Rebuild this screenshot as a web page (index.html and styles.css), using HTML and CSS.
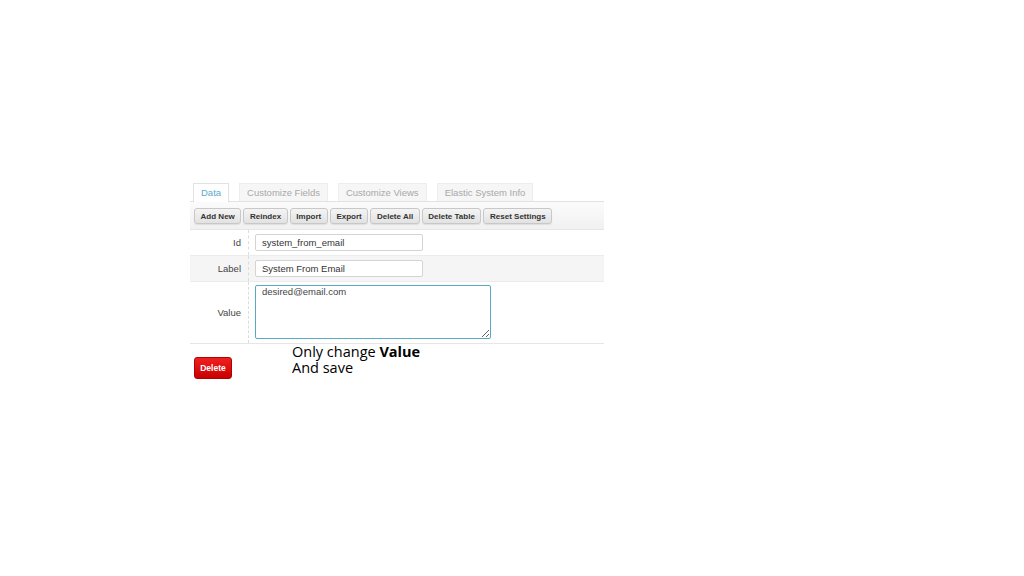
FILE: index.html
```html
<!DOCTYPE html>
<html>
<head>
<meta charset="utf-8">
<link rel="stylesheet" href="styles.css">
</head>
<body>
<div class="panel">
  <div class="tabs">
    <div class="tab active">Data</div>
    <div class="tab">Customize Fields</div>
    <div class="tab">Customize Views</div>
    <div class="tab">Elastic System Info</div>
  </div>
  <div class="toolbar">
    <button class="btn">Add New</button>
    <button class="btn">Reindex</button>
    <button class="btn">Import</button>
    <button class="btn">Export</button>
    <button class="btn">Delete All</button>
    <button class="btn">Delete Table</button>
    <button class="btn">Reset Settings</button>
  </div>
  <div class="form">
    <div class="row">
      <div class="label">Id</div>
      <div class="field"><input class="input" type="text" value="system_from_email"></div>
    </div>
    <div class="row alt">
      <div class="label">Label</div>
      <div class="field"><input class="input" type="text" value="System From Email"></div>
    </div>
    <div class="row tall">
      <div class="label">Value</div>
      <div class="field"><textarea class="area">desired@email.com</textarea></div>
    </div>
  </div>
  <div class="footer">
    <button class="delete">Delete</button>
    <div class="note">
      <div class="line">Only change <b>Value</b></div>
      <div class="line">And save</div>
    </div>
  </div>
</div>
</body>
</html>
```
FILE: styles.css
```css
html, body {
  margin: 0;
  padding: 0;
  background: #fff;
}
body {
  font-family: "Liberation Sans", Arial, sans-serif;
}
.panel {
  margin: 183px 0 0 190px;
  width: 414px;
}
.tabs {
  display: flex;
  gap: 10px;
  padding-left: 3px;
  height: 18px;
  border-bottom: 1px solid #e2e2e2;
}
.tab {
  box-sizing: border-box;
  height: 18px;
  padding: 0 7px;
  font-size: 9.5px;
  line-height: 18px;
  color: #a8a8a8;
  background: #f6f6f6;
  border: 1px solid #ededed;
  border-bottom: none;
}
.tab.active {
  height: 19px;
  color: #5aa9cc;
  background: #fff;
  border-color: #e2e2e2;
}
.toolbar {
  display: flex;
  gap: 2px;
  height: 28px;
  box-sizing: border-box;
  padding: 6px 0 0 4px;
  background: linear-gradient(#fbfbfb, #f1f1f1);
  border-bottom: 1px solid #e6e6e6;
}
.btn {
  height: 16px;
  padding: 0 5.6px;
  font-family: "Liberation Sans", Arial, sans-serif;
  font-size: 8px;
  font-weight: bold;
  color: #333;
  background: linear-gradient(#f4f4f4, #e2e2e2);
  border: 1px solid #c8c8c8;
  border-radius: 3px;
  box-shadow: 0 1px 1px rgba(0,0,0,0.08);
  line-height: 13px;
}
.row {
  display: flex;
  height: 26px;
  border-bottom: 1px solid #ececec;
  box-sizing: border-box;
}
.row.alt {
  background: #f5f5f5;
}
.row.tall {
  height: 62px;
  border-bottom: 1px solid #e6e6e6;
}
.label {
  width: 59px;
  box-sizing: border-box;
  padding-right: 7px;
  border-right: 1px dashed #dcdcdc;
  display: flex;
  align-items: center;
  justify-content: flex-end;
  font-size: 9.5px;
  color: #444;
}
.field {
  padding: 4px 0 0 6px;
}
.row.tall .field {
  padding-top: 3px;
}
.input {
  display: block;
  box-sizing: border-box;
  width: 168px;
  height: 17px;
  border: 1px solid #d4d4d4;
  border-radius: 2px;
  padding: 0 6px;
  font-family: "Liberation Sans", Arial, sans-serif;
  font-size: 9.5px;
  color: #333;
  background: #fff;
  margin: 0;
}
.area {
  display: block;
  box-sizing: border-box;
  width: 236px;
  height: 54px;
  border: 1px solid #5aa9c0;
  border-radius: 2px;
  padding: 0 6px;
  margin: 0;
  font-family: "Liberation Sans", Arial, sans-serif;
  font-size: 9.5px;
  line-height: 11px;
  color: #444;
  resize: both;
}
.footer {
  display: flex;
  align-items: flex-start;
  padding: 0 0 0 4px;
}
.delete {
  margin-top: 13px;
  width: 38px;
  height: 22px;
  padding: 0;
  font-family: "Liberation Sans", Arial, sans-serif;
  font-size: 8.5px;
  font-weight: bold;
  color: #fff;
  background: linear-gradient(#f02020, #c80000);
  border: 1px solid #b00000;
  border-radius: 3px;
}
.note {
  margin-left: 60px;
  font-family: "Open Sans", sans-serif;
  font-size: 14.5px;
  line-height: 16px;
  color: #000;
}
.line {
  height: 16px;
  white-space: nowrap;
}
.note b {
  font-weight: 700;
}
```
